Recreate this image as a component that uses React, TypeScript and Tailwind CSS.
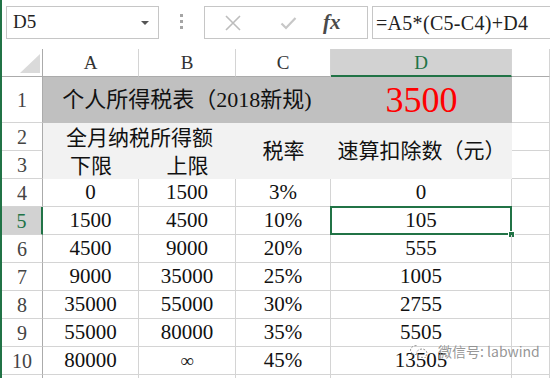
import React from "react";

const serif = "font-['Liberation_Serif','Noto_Sans_CJK_SC',serif]";

const rows: string[][] = [
    ["0", "1500", "3%", "0"],
    ["1500", "4500", "10%", "105"],
    ["4500", "9000", "20%", "555"],
    ["9000", "35000", "25%", "1005"],
    ["35000", "55000", "30%", "2755"],
    ["55000", "80000", "35%", "5505"],
    ["80000", "∞", "45%", "13505"],
];

const cols = ["A", "B", "C", "D"];

const ColHead: React.FC<{ label: string; active?: boolean }> = ({ label, active }) => (
    <div
        className={`flex items-center justify-center border-r border-[#d4d4d4] text-[19px] leading-none ${serif} ${
            active
                ? "bg-[#d2d2d2] text-[#217346] border-b-2 border-b-[#217346]"
                : "bg-white text-[#333] border-b border-b-[#ababab]"
        }`}
    >
        {label}
    </div>
);

const RowHead: React.FC<{ n: number; active?: boolean }> = ({ n, active }) => (
    <div
        className={`flex items-center justify-center border-b border-[#d4d4d4] text-[20px] leading-none ${serif} ${
            active
                ? "bg-[#d2d2d2] text-[#217346] border-r-2 border-r-[#217346]"
                : "bg-white text-[#444] border-r border-r-[#ababab]"
        }`}
    >
        {n}
    </div>
);

const Cell: React.FC<{ children?: React.ReactNode; className?: string }> = ({ children, className = "" }) => (
    <div className={`flex items-center justify-center border-r border-b border-[#d4d4d4] text-[21px] leading-none text-[#111] ${serif} ${className}`}>
        {children}
    </div>
);

// filled cells hide the gridlines, like in Excel
const Filled: React.FC<{ children?: React.ReactNode; className?: string; top?: boolean }> = ({ children, className = "", top }) => (
    <div className={`flex justify-center text-[21px] leading-none text-[#111] ${top ? "items-start pt-[5px]" : "items-center"} ${serif} ${className}`}>
        {children}
    </div>
);

const WeChatIcon = () => (
    <svg width="20" height="14" viewBox="0 0 20 14" fill="none" stroke="#9a9a9a" strokeWidth="1">
        <path d="M7.5 1.5c-3.3 0-6 2.1-6 4.6 0 1.4.8 2.6 2.1 3.5l-.5 1.8 2.1-1.1c.7.2 1.5.3 2.3.3" strokeDasharray="2 1.5" />
        <path d="M13 5c-3 0-5.4 1.9-5.4 4.2S10 13.4 13 13.4c.6 0 1.2-.1 1.8-.2l1.7.9-.4-1.5c1.1-.8 1.8-1.9 1.8-3.2C18 6.9 15.9 5 13 5z" strokeDasharray="2 1.5" />
    </svg>
);

export default function App() {
    return (
        <div className={`relative w-[550px] h-[378px] overflow-hidden bg-white border-l-2 border-[#217346] ${serif}`}>
            {/* formula bar */}
            <div className="flex items-start h-[49px] pt-[6px] pl-[4px]">
                <div className="relative flex items-center w-[153px] h-[33px] border border-[#c6c6c6] pl-[6px] text-[19px] text-[#222]">
                    D5
                    <div className="absolute right-[9px] top-[14px] w-0 h-0 border-l-[4px] border-r-[4px] border-t-[4px] border-l-transparent border-r-transparent border-t-[#555]" />
                </div>
                <div className="flex flex-col gap-[3px] mt-[8px] ml-[21px] w-[3px]">
                    <div className="w-[3px] h-[3px] bg-[#a5a5a5]" />
                    <div className="w-[3px] h-[3px] bg-[#a5a5a5]" />
                    <div className="w-[3px] h-[3px] bg-[#a5a5a5]" />
                </div>
                <div className="flex items-center w-[164px] h-[33px] ml-[21px] border border-[#c6c6c6]">
                    <svg width="16" height="16" viewBox="0 0 16 16" className="ml-[20px]" stroke="#bdbdbd" strokeWidth="1.6">
                        <path d="M1 1L15 15M15 1L1 15" />
                    </svg>
                    <svg width="17" height="14" viewBox="0 0 17 14" className="ml-[39px]" fill="none" stroke="#c7c7c7" strokeWidth="2.2">
                        <path d="M1.5 7.5L6 12L15.5 2" />
                    </svg>
                    <span className="ml-[26px] italic font-semibold text-[21px] text-[#4a4a4a] leading-none">fx</span>
                </div>
                <div className="flex items-center flex-1 h-[33px] ml-[4px] border border-r-0 border-[#c6c6c6] pl-[3px] text-[20px] tracking-[0.3px] text-[#222]">
                    =A5*(C5-C4)+D4
                </div>
            </div>

            {/* sheet */}
            <div className="grid grid-cols-[41px_96px_97px_95px_181px_38px] grid-rows-[28px_46px_repeat(10,28px)]">
                <div className="relative border-r border-r-[#ababab] border-b border-b-[#ababab] bg-white">
                    <svg width="20" height="19" viewBox="0 0 20 19" className="absolute left-[18px] top-[5px]">
                        <path d="M20 0L20 19L0 19Z" fill="#dadada" />
                    </svg>
                </div>
                {cols.map((c) => (
                    <ColHead key={c} label={c} active={c === "D"} />
                ))}
                <ColHead label="" />

                {/* row 1 */}
                <RowHead n={1} />
                <Filled className="col-span-3 bg-[#c0c0c0] text-[22px]">个人所得税表（2018新规)</Filled>
                <Filled className="bg-[#c0c0c0] text-[36px] text-[#ff0000]">3500</Filled>
                <Cell />

                {/* rows 2-3 */}
                <RowHead n={2} />
                <Filled top className="col-span-2 bg-[#f2f2f2]">全月纳税所得额</Filled>
                <Filled className="row-span-2 bg-[#f2f2f2]">税率</Filled>
                <Filled className="row-span-2 bg-[#f2f2f2]">速算扣除数（元）</Filled>
                <Cell />

                <RowHead n={3} />
                <Filled top className="bg-[#f2f2f2]">下限</Filled>
                <Filled top className="bg-[#f2f2f2]">上限</Filled>
                <Cell />

                {rows.map((r, i) => {
                    const n = i + 4;
                    return (
                        <React.Fragment key={n}>
                            <RowHead n={n} active={n === 5} />
                            <Cell>{r[0]}</Cell>
                            <Cell>{r[1] === "∞" ? <span className="text-[19px] text-[#222]">∞</span> : r[1]}</Cell>
                            <Cell>{r[2]}</Cell>
                            <Cell className="relative">
                                {r[3]}
                                {n === 5 && (
                                    <div className="absolute -left-px -top-px -right-px -bottom-px border-2 border-[#217346]">
                                        <div className="absolute -right-[5px] -bottom-[5px] w-[7px] h-[7px] bg-[#217346] border border-white" />
                                    </div>
                                )}
                            </Cell>
                            <Cell />
                        </React.Fragment>
                    );
                })}

                <RowHead n={11} />
                <Cell />
                <Cell />
                <Cell />
                <Cell />
                <Cell />
            </div>

            {/* watermark */}
            <div className="absolute left-[407px] top-[344px] flex items-center gap-[9px] text-[14px] text-[#8a8a8a]/90 font-['Noto_Sans_CJK_SC',sans-serif]">
                <WeChatIcon />
                <span className="leading-none">微信号: labwind</span>
            </div>
        </div>
    );
}
